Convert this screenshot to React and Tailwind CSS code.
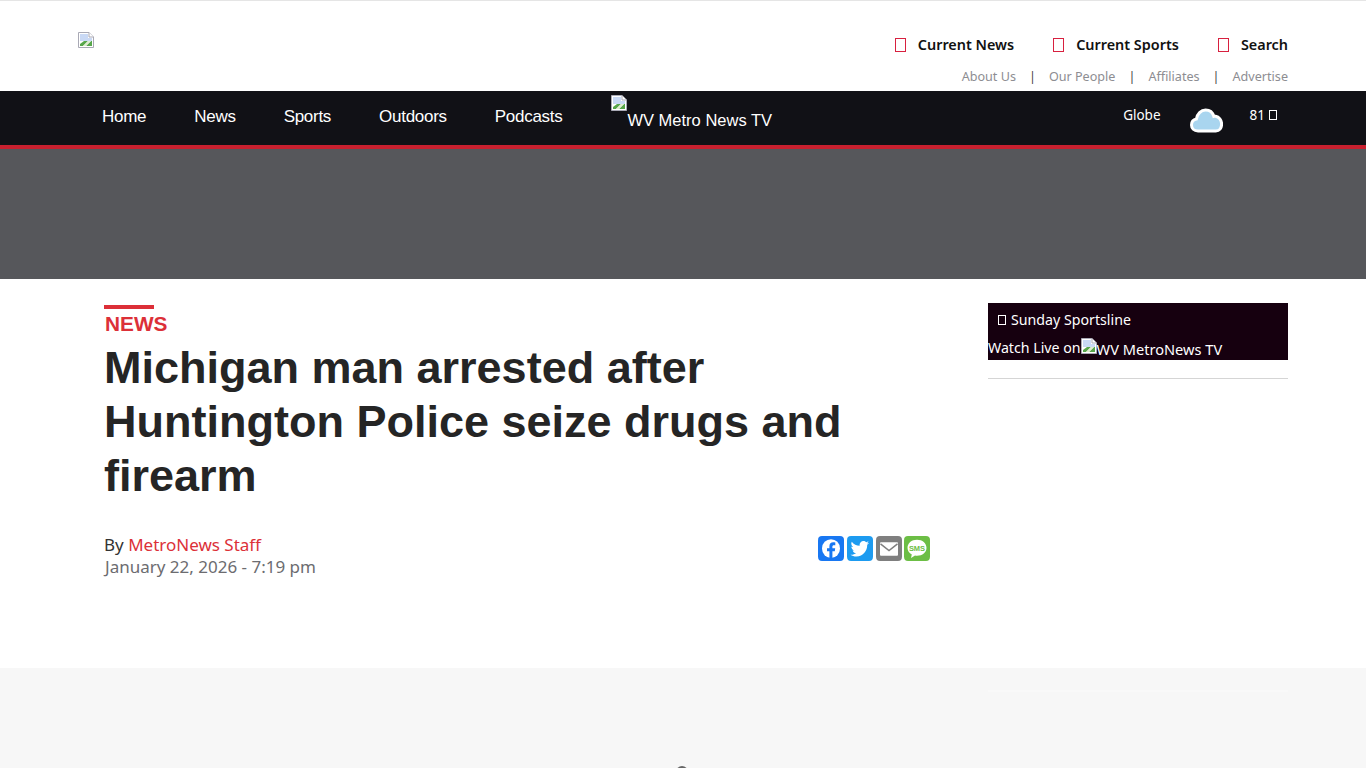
import React from "react";

const ARIAL = "font-['Liberation_Sans',Arial,sans-serif]";
const NOTO = "font-['Noto_Sans','Open_Sans',sans-serif]";

function BrokenImage({ className = "" }) {
  return (
    <svg width="16" height="16" viewBox="0 0 16 16" className={`shrink-0 ${className}`}>
      <path d="M0.5 0.5H11L15.5 5V15.5H0.5Z" fill="#fff" stroke="#a9a9b5" />
      <path d="M11 0.5V5H15.5" fill="#fff" stroke="#a9a9b5" />
      <path d="M2 2H10V6H14V9H2Z" fill="#c9d9f5" />
      <path d="M2 14V12L6 9L10 9L5 14Z" fill="#57a64b" />
      <path d="M8 14L13 9H14V14Z" fill="#57a64b" />
      <path d="M5 14L10 9H13L8 14Z" fill="#dfeccf" />
    </svg>
  );
}

function TopLink({ label }) {
  return (
    <a className="flex items-center gap-[12px]">
      <span className="w-[11px] h-[14px] border border-[#d8203f]" />
      <span className="text-[14.4px] font-semibold text-[#111]">{label}</span>
    </a>
  );
}

function Cloud() {
  return (
    <svg width="33" height="25" viewBox="0 0 33 25">
      <path
        d="M8 23C4 23 1.5 20.4 1.5 17C1.5 13.8 3.6 11.6 6.4 11C7.2 6 11 2 15.6 2C19.8 2 22.8 4.8 23.8 8.4C24.4 8.2 25 8.2 25.6 8.2C29 8.8 31.6 12.2 31.6 16C31.6 20.2 29.4 23 25.8 23Z"
        fill="#a9d5ef"
        stroke="#fff"
        strokeWidth="3"
      />
    </svg>
  );
}

function ShareIcons() {
  return (
    <div className="flex gap-[3px] mt-[2px]">
      <svg width="26" height="25" viewBox="0 0 26 24" preserveAspectRatio="none">
        <rect width="26" height="24" rx="4" fill="#1877f2" />
        <circle cx="13" cy="12" r="9" fill="#fff" />
        <path d="M14.4 21.5V14.6H16.8L17.2 11.8H14.4V10.2C14.4 9.3 14.8 8.8 15.9 8.8H17.3V6.3C16.7 6.2 15.9 6.1 15.2 6.1C12.9 6.1 11.4 7.5 11.4 9.9V11.8H9V14.6H11.4V21.5Z" fill="#1877f2" />
      </svg>
      <svg width="26" height="25" viewBox="0 0 26 24" preserveAspectRatio="none">
        <rect width="26" height="24" rx="4" fill="#1d9bf0" />
        <path d="M22 6.4C21.3 6.7 20.6 6.9 19.9 7C20.7 6.5 21.2 5.8 21.5 5C20.8 5.4 20 5.7 19.2 5.9C18.5 5.2 17.5 4.7 16.4 4.7C14.3 4.7 12.6 6.4 12.6 8.5C12.6 8.8 12.6 9.1 12.7 9.4C9.5 9.2 6.7 7.7 4.8 5.4C4.5 6 4.3 6.6 4.3 7.3C4.3 8.6 5 9.8 6 10.5C5.4 10.5 4.8 10.3 4.3 10V10.1C4.3 11.9 5.6 13.5 7.3 13.8C7 13.9 6.7 13.9 6.3 13.9C6.1 13.9 5.8 13.9 5.6 13.8C6.1 15.3 7.5 16.4 9.1 16.4C7.8 17.4 6.1 18.1 4.4 18.1C4.1 18.1 3.8 18.1 3.5 18C5.2 19.1 7.2 19.7 9.3 19.7C16.4 19.7 20.2 13.9 20.2 8.9V8.4C20.9 7.9 21.5 7.2 22 6.4Z" fill="#fff" />
      </svg>
      <svg width="26" height="25" viewBox="0 0 26 24" preserveAspectRatio="none">
        <rect width="26" height="24" rx="4" fill="#7f7f7f" />
        <rect x="4" y="6" width="18" height="13" rx="1" fill="#fff" />
        <path d="M4.5 7.5L13 14L21.5 7.5" fill="none" stroke="#7f7f7f" strokeWidth="1.5" />
      </svg>
      <svg width="26" height="25" viewBox="0 0 26 24" preserveAspectRatio="none" className="-ml-px">
        <rect width="26" height="24" rx="4" fill="#6cbe45" />
        <path d="M13 3.5C7.5 3.5 3.5 6.9 3.5 11.2C3.5 14 5.2 16.3 7.8 17.7L7 21L11 18.7C11.7 18.8 12.3 18.9 13 18.9C18.5 18.9 22.5 15.5 22.5 11.2C22.5 6.9 18.5 3.5 13 3.5Z" fill="#fff" />
        <text x="13" y="14" textAnchor="middle" fontSize="7.5" fontWeight="700" fill="#6cbe45" fontFamily="Liberation Sans">SMS</text>
      </svg>
    </div>
  );
}

export default function App() {
  const subLinks = ["About Us", "Our People", "Affiliates", "Advertise"];
  const navLinks = ["Home", "News", "Sports", "Outdoors", "Podcasts"];

  return (
    <div className={`h-screen overflow-hidden bg-white ${NOTO}`}>
      {/* Header */}
      <header className="h-[91px] border-t border-[#e5e5e5] pl-[78px] pr-[78px] flex justify-between">
        <BrokenImage className="mt-[31px]" />
        <div className="flex flex-col items-end pt-[33px]">
          <div className="flex gap-[39px] h-[21px] items-center">
            <TopLink label="Current News" />
            <TopLink label="Current Sports" />
            <TopLink label="Search" />
          </div>
          <div className="flex items-center mt-[13px] text-[12.6px] leading-[18px] text-[#8d8d92]">
            {subLinks.map((l, i) => (
              <React.Fragment key={l}>
                {i > 0 && <span className="mx-[13px] text-[#444]">|</span>}
                <a>{l}</a>
              </React.Fragment>
            ))}
          </div>
        </div>
      </header>

      {/* Nav */}
      <nav className="h-[58px] bg-[#111116] border-b-4 border-[#c8202f] pl-[78px] pr-[78px] flex justify-between text-white">
        <div className={`flex items-start ${ARIAL} text-[17px] tracking-[-0.28px]`}>
          {navLinks.map((l) => (
            <a key={l} className="px-6 pt-[15px] leading-[22px]">{l}</a>
          ))}
          <a className="pl-[25px] pt-[4px] flex w-[190px] tracking-normal text-[16.5px] leading-[19px]">
            <BrokenImage />
            <span className="mt-[16px]">WV Metro News TV</span>
          </a>
        </div>
        <div className="flex items-start text-[13.5px] pr-[11px]">
          <span className="pt-[14px] leading-[20px]">Globe</span>
          <span className="ml-[29px] mt-[17px]"><Cloud /></span>
          <span className="ml-[27px] pt-[14px] leading-[20px] flex items-center gap-[4px]">
            81 <span className="w-[8px] h-[10px] border border-white" />
          </span>
        </div>
      </nav>

      {/* Ad band */}
      <div className="h-[130px] bg-[#56575b]" />

      {/* Article */}
      <main className="h-[389px] pl-[105px] pr-[78px] flex justify-between">
        <div className="w-[825px] pt-[26px]">
          <div className="w-[50px] h-[4px] -ml-px bg-[#dc2f38]" />
          <div className={`${ARIAL} text-[20.8px] leading-[26px] mt-[2px] font-bold text-[#dc3038]`}>NEWS</div>
          <h1 className={`${ARIAL} text-[45px] leading-[54px] font-bold text-[#252525] mt-[4px] -ml-px w-[780px]`}>
            Michigan man arrested after Huntington Police seize drugs and firearm
          </h1>
          <div className="flex justify-between mt-[31px]">
            <div className="text-[17px] leading-[22px]">
              <div className="text-[#333] -ml-px">By <a className="text-[#dc3038]">MetroNews Staff</a></div>
              <div className="text-[#6c6c70]">January 22, 2026 - 7:19 pm</div>
            </div>
            <ShareIcons />
          </div>
        </div>
        <aside className="w-[300px] pt-[24px]">
          <div className="h-[57px] bg-[#16000f] text-white">
            <div className="pl-[10px] pt-[6px] leading-[22px] text-[14.2px] flex items-center gap-[5px]">
              <span className="w-[8px] h-[10px] border border-white" />
              Sunday Sportsline
            </div>
            <div className="flex items-start text-[14.2px] leading-[20px] mt-[8px]">
              <span className="mt-[-1px]">Watch Live on</span>
              <BrokenImage className="-mt-[1px]" />
              <span className="text-[14.6px]">WV MetroNews TV</span>
            </div>
          </div>
          <div className="h-px bg-[#d5d5d5] mt-[18px]" />
        </aside>
      </main>

      {/* Lower band */}
      <div className="relative h-[100px] bg-[#f7f7f7]">
        <div className="absolute left-[988px] top-[22px] w-[300px] h-[2px] bg-[#f9f9f9]" />
        <div className="absolute left-[676px] top-[98px] w-3 h-3 rounded-full bg-[#666]" />
      </div>
    </div>
  );
}
